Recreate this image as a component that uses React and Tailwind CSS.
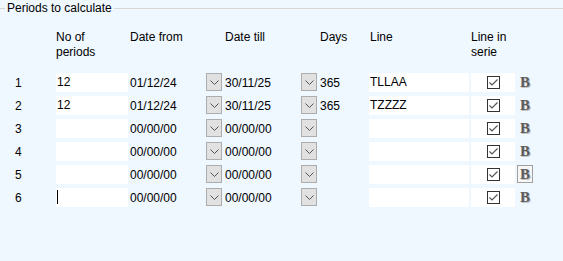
const rows = [
  { n: 1, periods: '12', from: '01/12/24', till: '30/11/25', days: '365', line: 'TLLAA' },
  { n: 2, periods: '12', from: '01/12/24', till: '30/11/25', days: '365', line: 'TZZZZ' },
  { n: 3, periods: '', from: '00/00/00', till: '00/00/00', days: '', line: '' },
  { n: 4, periods: '', from: '00/00/00', till: '00/00/00', days: '', line: '' },
  { n: 5, periods: '', from: '00/00/00', till: '00/00/00', days: '', line: '', active: true },
  { n: 6, periods: '', from: '00/00/00', till: '00/00/00', days: '', line: '', caret: true },
]

function DropButton() {
  return (
    <div className="w-[16px] h-[18px] shrink-0 bg-[#e1e1e1] border border-[#adadad] flex items-center justify-center">
      <svg width="9" height="5" viewBox="0 0 9 5">
        <path d="M0.5 0.5 L4.5 4.5 L8.5 0.5" fill="none" stroke="#555" strokeWidth="1" />
      </svg>
    </div>
  )
}

function Check() {
  return (
    <div className="w-[44px] h-[19px] shrink-0 bg-white flex items-center justify-center">
      <div className="w-[13px] h-[13px] border border-[#333] flex items-center justify-center">
        <svg width="9" height="7" viewBox="0 0 9 7">
          <path d="M0.5 3.5 L3 6 L8.5 0.5" fill="none" stroke="#555" strokeWidth="1.2" />
        </svg>
      </div>
    </div>
  )
}

function BoldIcon({ active }) {
  return (
    <div
      className={
        'w-[16px] h-[18px] shrink-0 flex items-center justify-center ' +
        (active ? 'border border-[#a0a0a0] bg-[#f6f6f6]' : 'border border-transparent')
      }
    >
      <span className="font-['Liberation_Serif',serif] font-bold text-[15px] leading-none text-[#5c5c5c] [text-shadow:1px_1px_0_#c0c0c0]">
        B
      </span>
    </div>
  )
}

export default function App() {
  return (
    <div className="w-[563px] h-[261px] bg-[#eff7ff] font-['Liberation_Sans',Arial,sans-serif] text-[12px] text-black overflow-hidden">
      <div className="flex items-center h-[16px] pt-[1px]">
        <div className="w-[5px] h-px bg-[#d6d6d6]" />
        <span className="px-[2px] leading-[15px]">Periods to calculate</span>
        <div className="flex-1 h-px bg-[#d6d6d6]" />
      </div>

      <div className="flex mt-[14px] pl-[56px] leading-[15px]">
        <div className="w-[74px]">No of<br />periods</div>
        <div className="w-[95px]">Date from</div>
        <div className="w-[95px]">Date till</div>
        <div className="w-[50px]">Days</div>
        <div className="w-[101px]">Line</div>
        <div>Line in<br />serie</div>
      </div>

      <div className="mt-[13px] flex flex-col gap-[4px]">
        {rows.map((r) => (
          <div key={r.n} className="flex items-start h-[19px] leading-[14px]">
            <div className="w-[56px] pl-[15px] pt-[3px]">{r.n}</div>
            <div className="w-[72px] h-[19px] bg-white pl-[1px] pt-[2px] flex">
              {r.caret ? <span className="w-px h-[14px] bg-black" /> : r.periods}
            </div>
            <div className="w-[78px] pl-[2px] pt-[3px]">{r.from}</div>
            <DropButton />
            <div className="w-[79px] pl-[3px] pt-[3px]">{r.till}</div>
            <DropButton />
            <div className="w-[52px] pl-[3px] pt-[3px]">{r.days}</div>
            <div className="w-[100px] h-[19px] bg-white pl-[1px] pt-[2px]">{r.line}</div>
            <div className="w-[2px]" />
            <Check />
            <div className="w-[2px]" />
            <BoldIcon active={r.active} />
          </div>
        ))}
      </div>
    </div>
  )
}
